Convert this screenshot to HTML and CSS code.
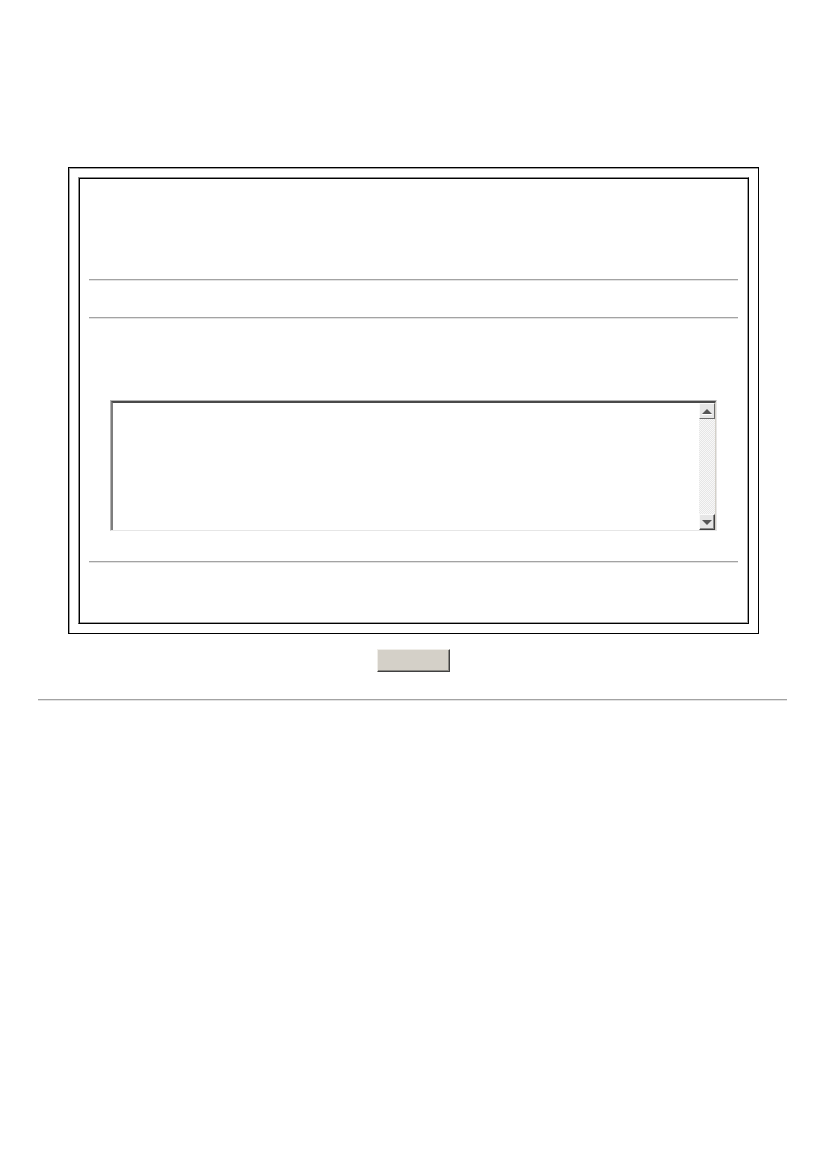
FILE: index.html
```html
<!DOCTYPE html>
<html lang="en">
<head>
    <meta charset="UTF-8">
    <meta name="viewport" content="width=device-width, initial-scale=1.0">
    <title>Form</title>
    <link rel="stylesheet" href="styles.css">
</head>
<body>
    <div class="page">
        <form class="frame">
            <div class="panel">
                <div class="panel-head"></div>
                <hr class="rule">
                <div class="panel-row"></div>
                <hr class="rule">
                <div class="panel-gap"></div>
                <div class="textbox">
                    <textarea class="textbox-input" name="message"></textarea>
                    <div class="scrollbar">
                        <span class="scroll-btn up"><i class="arrow-up"></i></span>
                        <span class="scroll-track"></span>
                        <span class="scroll-btn down"><i class="arrow-down"></i></span>
                    </div>
                </div>
                <hr class="rule rule-last">
                <div class="panel-foot"></div>
            </div>
        </form>
        <div class="actions">
            <button type="button" class="btn"></button>
        </div>
        <hr class="rule page-rule">
    </div>
</body>
</html>
```
FILE: styles.css
```css
body {
    margin: 0;
    background: #fff;
    font-family: "Liberation Sans", Arial, sans-serif;
    font-size: 13px;
}
.page {
    padding-top: 167px;
}
.frame {
    display: block;
    box-sizing: border-box;
    width: 691px;
    margin: 0 auto;
    padding: 9px;
    border: 1px solid #000;
    box-shadow: inset 1px 1px 0 #a0a0a0;
}
/* inner box: grey/black on top-left, black/grey on bottom-right */
.panel {
    border: 1px solid;
    border-color: #8c8c8c #000 #000 #8c8c8c;
    box-shadow: inset 1px 1px 0 #000, inset -1px -1px 0 #a0a0a0;
    padding: 0 10px;
}
.panel-head {
    height: 101px;
}
.panel-row {
    height: 36px;
}
.panel-gap {
    height: 81px;
}
.panel-foot {
    height: 60px;
}
.rule {
    margin: 0;
    height: 0;
    border: 0;
    border-top: 1px solid #a3a3a3;
    border-bottom: 1px solid #e2e2e2;
}
.rule-last {
    margin-top: 30px;
}

/* textarea with a classic inset frame and drawn scrollbar */
.textbox {
    display: flex;
    height: 131px;
    margin: 0 21px;
    box-sizing: border-box;
    border: 1px solid;
    border-color: #b4b4b4 #e6e6e6 #e6e6e6 #b4b4b4;
}
.textbox-input {
    flex: 1;
    border: 0;
    border-top: 2px solid #4a4a4a;
    border-left: 2px solid #7e7e7e;
    margin: 0;
    padding: 2px;
    resize: none;
    outline: none;
    overflow: hidden;
    font: inherit;
}
.scrollbar {
    width: 16px;
    display: flex;
    flex-direction: column;
    border-top: 2px solid #4a4a4a;
    border-right: 1px solid #d4d0c8;
}
.scroll-btn {
    height: 16px;
    box-sizing: border-box;
    display: flex;
    align-items: center;
    justify-content: center;
    background: #e6e6e6;
    border: 1px solid;
    border-color: #fafafa #6a6a6a #6a6a6a #fafafa;
}
.scroll-btn.down {
    border-color: #fafafa #404040 #404040 #fafafa;
    box-shadow: inset -1px -1px 0 #8a8a8a;
}
.scroll-track {
    flex: 1;
    background: repeating-conic-gradient(#e6e6e6 0 25%, #f8f8f8 0 50%) 0 0 / 2px 2px;
}
.arrow-up,
.arrow-down {
    width: 0;
    height: 0;
    border-left: 5px solid transparent;
    border-right: 5px solid transparent;
}
.arrow-up {
    border-bottom: 5px solid #555;
    box-shadow: 0 1px 0 #fff;
}
.arrow-down {
    border-top: 5px solid #555;
}

.actions {
    display: flex;
    justify-content: center;
    padding-top: 15px;
}
.btn {
    width: 73px;
    height: 23px;
    padding: 0;
    background: #d4d0c8;
    border: 1px solid;
    border-color: #efede8 #404040 #404040 #efede8;
    box-shadow: inset -1px -1px 0 #8c8a85;
    cursor: pointer;
}
.page-rule {
    margin: 27px 39px 0 38px;
}
```
